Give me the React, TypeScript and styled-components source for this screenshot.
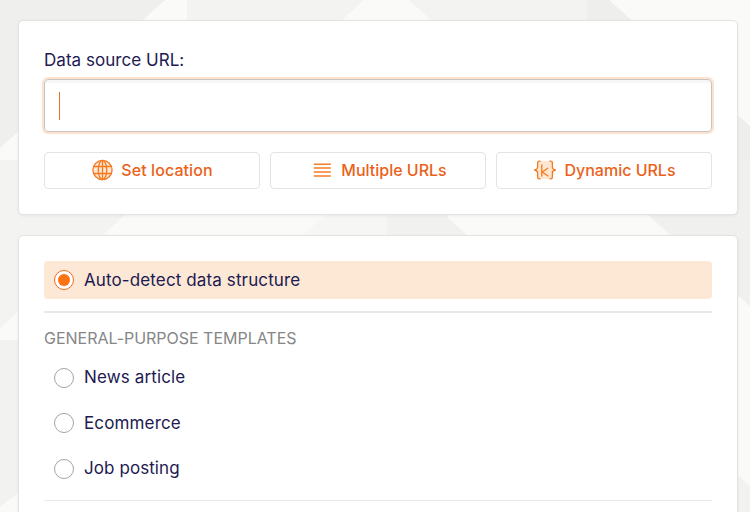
import React from 'react';
import styled, { createGlobalStyle } from 'styled-components';

const GlobalStyle = createGlobalStyle`
  * { box-sizing: border-box; }
  html, body { margin: 0; overflow: hidden; }
  body { background: #f2f2f0; font-family: Inter, sans-serif; color: #211a52; }
`;

const Page = styled.main`
  position: relative;
  height: 512px;
  overflow: hidden;
  padding: 20px 12px 0 18px;
  display: flex;
  flex-direction: column;
  gap: 20px;
`;

const Backdrop = styled.svg`
  position: absolute;
  inset: 0;
  z-index: -1;
`;

const Card = styled.section<{ $height: number }>`
  flex: none;
  height: ${p => p.$height}px;
  padding: 25px;
  background: #fff;
  border: 1px solid #e3e3e2;
  border-radius: 5px;
  box-shadow: 0 1px 3px rgba(0, 0, 0, 0.06);
`;

const Label = styled.label`
  display: block;
  height: 33px;
  line-height: 29px;
  font-size: 17px;
  letter-spacing: 0.04px;
`;

const UrlField = styled.div`
  height: 53px;
  padding: 12px 14px;
  border: 1px solid #c8c4c0;
  border-radius: 4px;
  box-shadow: 0 0 0 2px #fee2d0, inset 0 4px 2px -1px #f6f6f6;
`;

const Caret = styled.span`
  display: block;
  width: 1px;
  height: 28px;
  background: #e8702a;
`;

const ButtonRow = styled.div`
  display: grid;
  grid-template-columns: repeat(3, 1fr);
  gap: 10px;
  margin-top: 20px;
`;

const ActionButton = styled.button<{ $gap: number; $spacing: number }>`
  display: flex;
  align-items: center;
  justify-content: center;
  gap: ${p => p.$gap}px;
  height: 37px;
  padding: 0 0 1px 1px;
  background: #fff;
  border: 1px solid #e3e3e3;
  border-radius: 4px;
  color: #eb6119;
  font: 500 16px/24px Inter, sans-serif;
  letter-spacing: ${p => p.$spacing}px;
  white-space: nowrap;
  svg { flex: none; }
`;

const Option = styled.label<{ $selected?: boolean; $spacing?: number }>`
  display: flex;
  align-items: center;
  gap: 10px;
  height: 38px;
  padding-left: 10px;
  border-radius: 4px;
  background: ${p => (p.$selected ? '#fde8d5' : 'transparent')};
  font-size: 17px;
  letter-spacing: ${p => p.$spacing ?? 0}px;
  line-height: 24px;
`;

const OptionList = styled.div`
  display: grid;
  gap: 7.5px;
`;

const Radio = styled.span<{ $selected?: boolean }>`
  display: grid;
  place-items: center;
  width: 20px;
  height: 20px;
  margin-top: ${p => (p.$selected ? 0 : 1)}px;
  border: 1px solid ${p => (p.$selected ? '#f06a20' : '#a8a39e')};
  border-radius: 50%;
  background: #fff;
  &::after {
    content: '';
    width: 12px;
    height: 12px;
    border-radius: 50%;
    background: ${p => (p.$selected ? '#fb7413' : 'transparent')};
  }
`;

const Divider = styled.hr<{ $weight: number; $space: number }>`
  height: ${p => p.$weight}px;
  margin: ${p => p.$space}px 0 0;
  border: 0;
  background: #e8e8e8;
`;

const GroupTitle = styled.h2`
  margin: 14px 0 8px;
  height: 23px;
  font-size: 16px;
  font-weight: 400;
  letter-spacing: -0.02px;
  line-height: 23px;
  color: #868686;
`;

const GlobeIcon = () => (
  <svg width="21" height="22" viewBox="0.5 0 21 22" fill="none" stroke="#f47a20" strokeWidth="1.3">
    <circle cx="11" cy="11" r="9.6" fill="#fde6d2" />
    <ellipse cx="11" cy="11" rx="4.2" ry="9.6" />
    <path d="M11 1.4v19.2M2 7.5h18M2 14.5h18" />
  </svg>
);

const LinesIcon = () => (
  <svg width="22" height="14" viewBox="-4 0 22 14" stroke="#f57c28" strokeWidth="1.5">
    <path d="M-.2 1.2h17M-.2 5.1h17M-.2 9h17M-.2 12.9h17" />
  </svg>
);

const BracesIcon = () => (
  <svg width="24" height="20" viewBox="0 0 24 20" fill="none" stroke="#f47a20" strokeWidth="1.3">
    <path d="M5 1h14v18H5z" fill="#fde6d2" stroke="none" />
    <path d="M7.5 1.2H6.3Q4.6 1.2 4.6 3.2v4Q4.6 9.6 1.2 10q3.4.4 3.4 2.8v4q0 2 1.7 2h1.2M16.5 1.2h1.2q1.7 0 1.7 2v4q0 2.4 3.4 2.8-3.4.4-3.4 2.8v4q0 2-1.7 2h-1.2" />
    <path d="M8.8 4.4v12.2M15.2 8l-5.9 4 6.1 4.2" />
  </svg>
);

const Facets = () => (
  <Backdrop width="750" height="512" viewBox="0 0 750 512">
    <path d="M0 0h165L0 148z" fill="#efefed" />
    <path d="M165 0h22v160H0v-12z" fill="#fafaf8" />
    <path d="M187 0h177L187 160z" fill="#f3f3f1" />
    <path d="M364 0h45l180 160H187z" fill="#fafaf8" />
    <path d="M409 0h178v160z" fill="#f3f3f1" />
    <path d="M587 0h22l141 126v34H587z" fill="#eeeeec" />
    <path d="M609 0h141v126z" fill="#fafaf8" />
    <path d="M0 160h187L0 328z" fill="#f3f3f1" />
    <path d="M125 215h262v125H0v-12z" fill="#fafaf8" />
    <path d="M325 215h62v125H187z" fill="#f6f6f4" />
    <path d="M387 160l203 180H387z" fill="#f1f1ef" />
    <path d="M448 215h200l102 91v180L448 218z" fill="#fafaf8" />
    <path d="M587 160h163v146z" fill="#f0f0ee" />
    <path d="M0 507l18-14v19H0z" fill="#fafaf8" />
  </Backdrop>
);

const templates = [
  { name: 'News article', spacing: 0.14 },
  { name: 'Ecommerce', spacing: 0.14 },
  { name: 'Job posting', spacing: 0.08 },
];

export default function App() {
  return (
    <>
      <GlobalStyle />
      <Page>
        <Facets />
        <Card $height={195}>
          <Label>Data source URL:</Label>
          <UrlField><Caret /></UrlField>
          <ButtonRow>
            <ActionButton $gap={8} $spacing={0.08}><GlobeIcon />Set location</ActionButton>
            <ActionButton $gap={9} $spacing={0}><LinesIcon />Multiple URLs</ActionButton>
            <ActionButton $gap={7} $spacing={0}><BracesIcon />Dynamic URLs</ActionButton>
          </ButtonRow>
        </Card>
        <Card $height={400}>
          <Option $selected $spacing={0.12}><Radio $selected />Auto-detect data structure</Option>
          <Divider $weight={2} $space={12} />
          <GroupTitle>GENERAL-PURPOSE TEMPLATES</GroupTitle>
          <OptionList>
            {templates.map(t => (
              <Option key={t.name} $spacing={t.spacing}><Radio />{t.name}</Option>
            ))}
          </OptionList>
          <Divider $weight={1} $space={13} />
        </Card>
      </Page>
    </>
  );
}
